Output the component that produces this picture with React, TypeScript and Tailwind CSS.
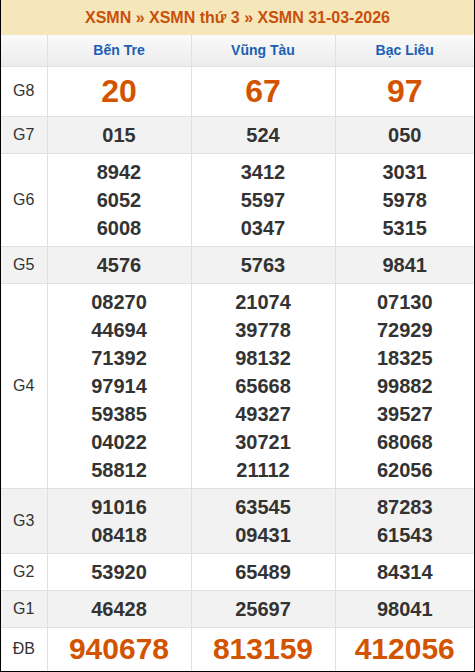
import React from "react";

type Row = { label: string; cols: string[][]; kind: "g8" | "db" | "normal"; gray: boolean };

const rows: Row[] = [
  { label: "G8", cols: [["20"], ["67"], ["97"]], kind: "g8", gray: false },
  { label: "G7", cols: [["015"], ["524"], ["050"]], kind: "normal", gray: true },
  {
    label: "G6",
    cols: [
      ["8942", "6052", "6008"],
      ["3412", "5597", "0347"],
      ["3031", "5978", "5315"],
    ],
    kind: "normal",
    gray: false,
  },
  { label: "G5", cols: [["4576"], ["5763"], ["9841"]], kind: "normal", gray: true },
  {
    label: "G4",
    cols: [
      ["08270", "44694", "71392", "97914", "59385", "04022", "58812"],
      ["21074", "39778", "98132", "65668", "49327", "30721", "21112"],
      ["07130", "72929", "18325", "99882", "39527", "68068", "62056"],
    ],
    kind: "normal",
    gray: false,
  },
  {
    label: "G3",
    cols: [
      ["91016", "08418"],
      ["63545", "09431"],
      ["87283", "61543"],
    ],
    kind: "normal",
    gray: true,
  },
  { label: "G2", cols: [["53920"], ["65489"], ["84314"]], kind: "normal", gray: false },
  { label: "G1", cols: [["46428"], ["25697"], ["98041"]], kind: "normal", gray: true },
  { label: "ĐB", cols: [["940678"], ["813159"], ["412056"]], kind: "db", gray: false },
];

export default function App() {
  return (
    <div
      className="w-[475px] h-[672px] bg-white border-l border-r border-b border-black box-border overflow-hidden"
      style={{ fontFamily: '"Liberation Sans", Arial, sans-serif' }}
    >
      <div className="h-[35px] bg-[#f6e7ba] flex items-center justify-center text-[16px] font-bold text-[#c8500c]">
        XSMN » XSMN thứ 3 » XSMN 31-03-2026
      </div>
      <table className="w-full border-collapse table-fixed">
        <colgroup>
          <col className="w-[46px]" />
          <col className="w-[144px]" />
          <col className="w-[144px]" />
          <col />
        </colgroup>
        <thead>
          <tr className="h-[31px] bg-gradient-to-b from-[#fafafa] to-[#ececec]">
            <th className="border-r border-[#e0e0e0]"></th>
            <th className="border-r border-[#e0e0e0] text-[14px] font-bold text-[#1a5fb4]">Bến Tre</th>
            <th className="border-r border-[#e0e0e0] text-[14px] font-bold text-[#1a5fb4]">Vũng Tàu</th>
            <th className="text-[14px] font-bold text-[#1a5fb4]">Bạc Liêu</th>
          </tr>
        </thead>
        <tbody>
          {rows.map((r) => {
            const h =
              r.kind === "g8"
                ? "h-[50px]"
                : r.kind === "db"
                ? "h-[44px]"
                : "";
            return (
              <tr key={r.label} className={`${r.gray ? "bg-[#f2f2f2]" : "bg-white"} ${h} border-t border-[#e0e0e0]`}>
                <td className="text-[16px] text-[#333] text-center align-middle border-r border-[#e0e0e0]">
                  {r.label}
                </td>
                {r.cols.map((c, i) => (
                  <td
                    key={i}
                    className={`text-center align-middle font-bold ${i < 2 ? "border-r border-[#e0e0e0]" : ""} ${
                      r.kind === "normal" ? "py-[4px]" : ""
                    }`}
                  >
                    {r.kind === "g8" ? (
                      <div className="text-[32px] leading-[36px] text-[#d35400]">{c[0]}</div>
                    ) : r.kind === "db" ? (
                      <div className="text-[30px] leading-[34px] text-[#d35400]">{c[0]}</div>
                    ) : (
                      c.map((n, j) => (
                        <div key={j} className="text-[20px] leading-[28px] text-[#333]">
                          {n}
                        </div>
                      ))
                    )}
                  </td>
                ))}
              </tr>
            );
          })}
        </tbody>
      </table>
    </div>
  );
}
